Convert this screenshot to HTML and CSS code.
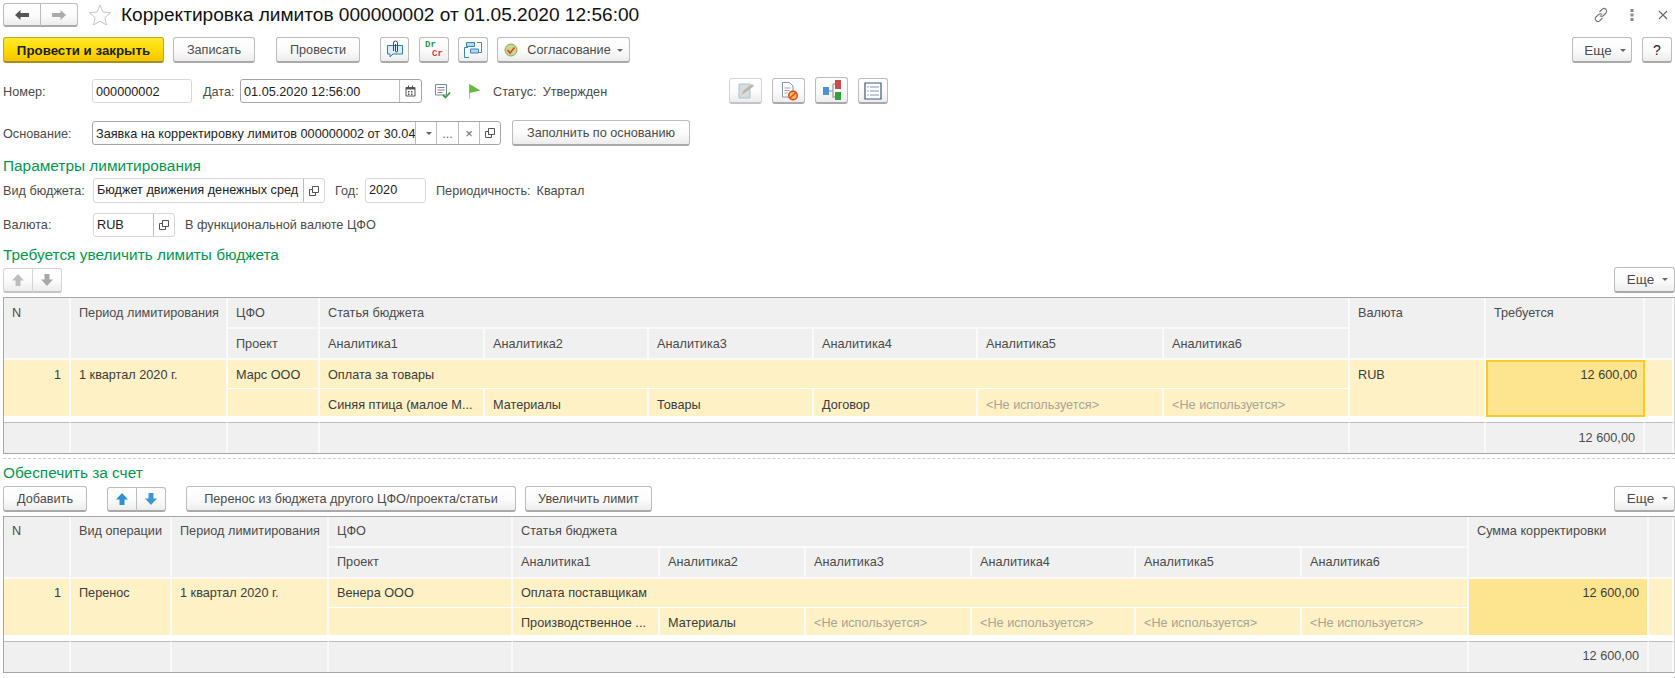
FILE: index.html
```html
<!DOCTYPE html>
<html lang="ru">
    <head>
        <meta charset="UTF-8">
        <title>Корректировка лимитов 000000002</title>
        <link rel="stylesheet" href="styles.css">
    </head>
    <body>
        <!-- заголовок -->
        <div class="title-row">
            <div class="group nav-group">
                <button class="btn nav-btn"><svg width="16" height="12" viewBox="0 0 16 12"><path d="M1 6 6.500 1v3H15v4H6.500v3z" fill="#555"/></svg></button>
                <button class="btn nav-btn"><svg width="16" height="12" viewBox="0 0 16 12"><path d="M15 6 9.500 1v3H1v4h8.500v3z" fill="#aaa"/></svg></button>
            </div>
            <svg class="star" width="24" height="24" viewBox="0 0 24 24"><path d="M12 2l3 7 7.500.7-5.700 5 1.700 7.300L12 18.200 5.500 22l1.700-7.300-5.700-5L9 9z" fill="#fff" stroke="#c4c4c4"/></svg>
            <h1>Корректировка лимитов 000000002 от 01.05.2020 12:56:00</h1>
            <div class="win-icons">
                <svg width="16" height="16" viewBox="0 0 16 16" fill="none" stroke="#777" stroke-width="1.100"><path d="M6.500 5 9 2.500a2.600 2.600 0 0 1 4 3.500l-2.500 2.500a2.600 2.600 0 0 1-3.700 0"/><path d="M9.500 11 7 13.500A2.600 2.600 0 0 1 3 10l2.500-2.500a2.600 2.600 0 0 1 3.700 0"/></svg>
                <svg class="dots" width="4" height="14" viewBox="0 0 4 14"><path d="M.5 1h3v3h-3zM.5 5.500h3v3h-3zM.5 10h3v3h-3z" fill="#888"/></svg>
                <svg class="close" width="10" height="10" viewBox="0 0 10 10"><path d="M1 1l8 8M9 1l-8 8" stroke="#666" stroke-width="1.100"/></svg>
            </div>
        </div>

        <!-- команды -->
        <div class="toolbar main-bar">
            <button class="btn primary w-post-close">Провести и закрыть</button>
            <button class="btn w-save">Записать</button>
            <button class="btn w-post">Провести</button>
            <button class="btn icon-btn i-clip">
                <svg width="18" height="20" viewBox="0 0 18 20"><path d="M1.500 5.500h15V14H7l-3 3v-3H1.500z" fill="#dcecf6" stroke="#2f7fa8"/><path d="M7.500 11V3a2 2 0 0 1 4 0v8a1 1 0 0 1-2 0V4" fill="none" stroke="#444"/></svg>
            </button>
            <button class="btn icon-btn dr-cr"><span class="dr">Dr</span><span class="cr">Cr</span></button>
            <button class="btn icon-btn">
                <svg width="20" height="20" viewBox="0 0 20 20" fill="none" stroke="#3a86b7"><path d="M5 7.500H1.500v10H6"/><path d="M14 2.500h4.500v10H15"/><path d="M3.500 2.500h8v4h-8z" fill="#b9d6ea"/><path d="M7.500 9h8v4h-8z" fill="#b9d6ea"/></svg>
            </button>
            <button class="btn w-agree">
                <svg width="14" height="14" viewBox="0 0 14 14"><circle cx="7" cy="7" r="6" fill="#c7d88e" stroke="#8fa65a"/><path d="M3.500 7l2.500 3 4.500-5.500" fill="none" stroke="#d8402c" stroke-width="1.500"/></svg>
                <span class="agree-text">Согласование</span><i class="caret"></i>
            </button>
            <button class="btn more push">Еще<i class="caret"></i></button>
            <button class="btn help">?</button>
        </div>

        <!-- номер, дата -->
        <div class="form-row row-number">
            <label class="lbl w-label">Номер:</label>
            <div class="field w-number"><span class="val">000000002</span></div>
            <label class="lbl m-date">Дата:</label>
            <div class="field active w-date">
                <span class="val">01.05.2020 12:56:00</span>
                <span class="seg seg-cal"><svg width="11" height="12" viewBox="0 0 11 12"><path d="M1 2.500h9V11H1z" fill="#fff" stroke="#555"/><path d="M1 2h9v2.500H1zM3 .5h1v2H3zM7 .5h1v2H7z" fill="#555"/><path d="M3 6h1.500v1.500H3zM6 6h1.500v1.500H6zM3 8.500h1.500V10H3zM6 8.500h1.500V10H6z" fill="#555"/></svg></span>
            </div>
            <svg class="doc-check" width="17" height="16" viewBox="0 0 17 16"><path d="M1.500 1.500h11V12h-11z" fill="#fff" stroke="#7a8a96"/><path d="M3.500 4.500h7M3.500 7h7M3.500 9.500h5" stroke="#7a8a96"/><path d="M9 12l2.500 2.500L16 9.500" fill="none" stroke="#3aa335" stroke-width="1.800"/></svg>
            <svg class="flag" width="13" height="17" viewBox="0 0 13 17"><path d="M1.500 1v15" stroke="#b5b5b5"/><path d="M1.500 1l11 6.500-11 2.500z" fill="#63bb3b"/></svg>
            <span class="lbl m-status">Статус:</span>
            <span class="lbl m-state">Утвержден</span>
            <button class="btn icon-btn2 disabled m-first">
                <svg width="20" height="20" viewBox="0 0 20 20"><path d="M3 3h11v14H3z" fill="#d8dcdc" stroke="#a9c3d2"/><path d="M5 14l3-5 8-6 2 2-8 6z" fill="#bcb3a9"/></svg>
            </button>
            <button class="btn icon-btn2">
                <svg width="20" height="20" viewBox="0 0 20 20"><path d="M3.500 1.500h7l3.500 3.500v11h-10.500z" fill="#fff" stroke="#8896a0"/><path d="M5.500 7h6M5.500 9.500h5M5.500 12h3" stroke="#9aa5ad"/><circle cx="14" cy="14.500" r="4.300" fill="#f6c343" stroke="#e0402a" stroke-width="1.400"/><path d="M11 17l6-5.500" stroke="#e0402a" stroke-width="1.400"/></svg>
            </button>
            <button class="btn icon-btn2 tall">
                <svg width="20" height="22" viewBox="0 0 20 22"><path d="M1 8h6v8H1z" fill="#4a90d9"/><path d="M7 12h4M11 5v13h3M11 5h3" fill="none" stroke="#aaa" stroke-width="1.500"/><path d="M13 1h6v9h-6z" fill="#cf4a4a"/><path d="M13 13h6v8h-6z" fill="#2fa23c"/></svg>
            </button>
            <button class="btn icon-btn2">
                <svg width="18" height="18" viewBox="0 0 18 18"><path d="M1 1h16v16H1z" fill="#fff" stroke="#3c5b78" stroke-width="1.200"/><path d="M3.500 5h1M3.500 9h1M3.500 13h1" stroke="#3c5b78"/><path d="M6 5h9M6 9h9M6 13h9" stroke="#8096a8"/></svg>
            </button>
        </div>

        <div class="form-row row-basis">
            <label class="lbl w-label">Основание:</label>
            <div class="field active w-basis">
                <span class="val">Заявка на корректировку лимитов 000000002 от 30.04</span>
                <span class="seg seg-drop"><i class="caret dark"></i></span>
                <span class="seg seg-pick">...</span>
                <span class="seg seg-clear">×</span>
                <span class="seg seg-open"><svg class="open-ico" width="10" height="10" viewBox="0 0 10 10"><path d="M3.500.5h6v6h-6z" fill="none" stroke="#555"/><path d="M.5 3.500h3v3h3v3h-6z" fill="none" stroke="#555"/></svg></span>
            </div>
            <button class="btn w-fill">Заполнить по основанию</button>
        </div>

        <h3 class="head h-params">Параметры лимитирования</h3>

        <div class="form-row row-kind">
            <label class="lbl w-label">Вид бюджета:</label>
            <div class="field w-kind">
                <span class="val">Бюджет движения денежных сред</span>
                <span class="seg seg-open"><svg class="open-ico" width="10" height="10" viewBox="0 0 10 10"><path d="M3.500.5h6v6h-6z" fill="none" stroke="#555"/><path d="M.5 3.500h3v3h3v3h-6z" fill="none" stroke="#555"/></svg></span>
            </div>
            <label class="lbl m-year">Год:</label>
            <div class="field w-year"><span class="val">2020</span></div>
            <span class="lbl m-period">Периодичность:</span>
            <span class="lbl m-quarter">Квартал</span>
        </div>

        <div class="form-row row-cur">
            <label class="lbl w-label">Валюта:</label>
            <div class="field w-cur">
                <span class="val">RUB</span>
                <span class="seg seg-open"><svg class="open-ico" width="10" height="10" viewBox="0 0 10 10"><path d="M3.500.5h6v6h-6z" fill="none" stroke="#555"/><path d="M.5 3.500h3v3h3v3h-6z" fill="none" stroke="#555"/></svg></span>
            </div>
            <span class="lbl m-func">В функциональной валюте ЦФО</span>
        </div>

        <h3 class="head h-need">Требуется увеличить лимиты бюджета</h3>

        <div class="toolbar grid-bar">
            <div class="group w-arrows disabled">
                <button class="btn seg-btn"><svg width="14" height="14" viewBox="0 0 14 14"><path d="M7 1l6 6.500H9.500V13h-5V7.500H1z" fill="#bdbdbd"/></svg></button>
                <button class="btn seg-btn"><svg width="14" height="14" viewBox="0 0 14 14"><path d="M7 13l6-6.500H9.500V1h-5v5.500H1z" fill="#a8a8a8"/></svg></button>
            </div>
            <button class="btn more push">Еще<i class="caret"></i></button>
        </div>

        <!-- таблица 1 -->
        <table class="grid first-grid">
            <colgroup>
                <col class="c67"><col class="c157"><col class="c92"><col class="c165"><col class="c164"><col class="c165"><col class="c164"><col class="c186"><col class="c186"><col class="c136"><col class="c159"><col class="c29">
            </colgroup>
            <tr class="head-row">
                <th rowspan="2">N</th>
                <th rowspan="2">Период лимитирования</th>
                <th>ЦФО</th>
                <th colspan="6">Статья бюджета</th>
                <th rowspan="2">Валюта</th>
                <th rowspan="2">Требуется</th>
                <th rowspan="2"></th>
            </tr>
            <tr class="head-row">
                <th>Проект</th>
                <th>Аналитика1</th><th>Аналитика2</th><th>Аналитика3</th><th>Аналитика4</th><th>Аналитика5</th><th>Аналитика6</th>
            </tr>
            <tr class="data-row">
                <td rowspan="2" class="num">1</td>
                <td rowspan="2">1 квартал 2020 г.</td>
                <td>Марс ООО</td>
                <td colspan="6">Оплата за товары</td>
                <td rowspan="2">RUB</td>
                <td rowspan="2" class="num amount selected">12 600,00</td>
                <td rowspan="2"></td>
            </tr>
            <tr class="data-row">
                <td></td>
                <td>Синяя птица (малое М...</td><td>Материалы</td><td>Товары</td><td>Договор</td>
                <td class="unused">&lt;Не используется&gt;</td><td class="unused">&lt;Не используется&gt;</td>
            </tr>
            <tr class="gap-row"><td colspan="12"></td></tr>
            <tr class="foot-row">
                <td></td><td></td><td></td><td colspan="6"></td><td></td>
                <td class="num">12 600,00</td><td></td>
            </tr>
        </table>

        <div class="dash"></div>

        <h3 class="head h-cover">Обеспечить за счет</h3>

        <div class="toolbar grid-bar2">
            <button class="btn w-add">Добавить</button>
            <div class="group w-arrows2">
                <button class="btn seg-btn"><svg width="14" height="14" viewBox="0 0 14 14"><path d="M7 1l6 6.500H9.500V13h-5V7.500H1z" fill="#2f8fd0"/></svg></button>
                <button class="btn seg-btn"><svg width="14" height="14" viewBox="0 0 14 14"><path d="M7 13l6-6.500H9.500V1h-5v5.500H1z" fill="#3f97d6"/></svg></button>
            </div>
            <button class="btn w-transfer">Перенос из бюджета другого ЦФО/проекта/статьи</button>
            <button class="btn w-raise">Увеличить лимит</button>
            <button class="btn more push">Еще<i class="caret"></i></button>
        </div>

        <!-- таблица 2 -->
        <table class="grid">
            <colgroup>
                <col class="c67"><col class="c101"><col class="c157"><col class="c184"><col class="c147"><col class="c146"><col class="c166"><col class="c164"><col class="c166"><col class="c167"><col class="c180"><col class="c25">
            </colgroup>
            <tr class="head-row">
                <th rowspan="2">N</th>
                <th rowspan="2">Вид операции</th>
                <th rowspan="2">Период лимитирования</th>
                <th>ЦФО</th>
                <th colspan="6">Статья бюджета</th>
                <th rowspan="2">Сумма корректировки</th>
                <th rowspan="2"></th>
            </tr>
            <tr class="head-row">
                <th>Проект</th>
                <th>Аналитика1</th><th>Аналитика2</th><th>Аналитика3</th><th>Аналитика4</th><th>Аналитика5</th><th>Аналитика6</th>
            </tr>
            <tr class="data-row">
                <td rowspan="2" class="num">1</td>
                <td rowspan="2">Перенос</td>
                <td rowspan="2">1 квартал 2020 г.</td>
                <td>Венера ООО</td>
                <td colspan="6">Оплата поставщикам</td>
                <td rowspan="2" class="num amount">12 600,00</td>
                <td rowspan="2"></td>
            </tr>
            <tr class="data-row">
                <td></td>
                <td>Производственное ...</td><td>Материалы</td>
                <td class="unused">&lt;Не используется&gt;</td><td class="unused">&lt;Не используется&gt;</td><td class="unused">&lt;Не используется&gt;</td><td class="unused">&lt;Не используется&gt;</td>
            </tr>
            <tr class="gap-row"><td colspan="12"></td></tr>
            <tr class="foot-row">
                <td></td><td></td><td></td><td></td><td colspan="6"></td>
                <td class="num">12 600,00</td><td></td>
            </tr>
        </table>
        <div class="next-edge"></div>
    </body>
</html>
```

FILE: styles.css
```css
html, body {
    margin: 0;
    padding: 0;
    height: 678px;
    overflow: hidden;
    background: #fff;
}

body {
    font-family: "Liberation Sans", Arial, sans-serif;
    font-size: 12.7px;
    color: #4b4b4b;
}

button {
    font: inherit;
    color: inherit;
    padding: 0;
}

/* кнопки */
.btn {
    display: flex;
    align-items: center;
    justify-content: center;
    height: 26px;
    box-sizing: border-box;
    border: 1px solid #bcbcbc;
    border-bottom: 2px solid #a9a9a9;
    border-radius: 3px;
    background: linear-gradient(#ffffff, #fbfbfb 55%, #ececec);
    flex: none;
}

.primary {
    font-size: 13.3px;
    font-weight: bold;
    color: #1e1e1e;
    border-color: #c4a824;
    border-bottom-color: #a89020;
    background: linear-gradient(#ffe92f, #fdd900 55%, #f4c400);
}

.group {
    display: flex;
    flex: none;
}

.group .btn + .btn {
    margin-left: -1px;
}

.group .btn:first-child {
    border-radius: 3px 0 0 3px;
}

.group .btn:last-child {
    border-radius: 0 3px 3px 0;
}

.seg-btn {
    width: 30px;
    height: 25px;
}

.disabled .seg-btn, .btn.disabled {
    border-color: #d4d4d4;
    border-bottom-color: #c4c4c4;
}

.caret {
    display: inline-block;
    width: 0;
    height: 0;
    margin-left: 6px;
    border-left: 3px solid transparent;
    border-right: 3px solid transparent;
    border-top: 3px solid #666;
}

/* заголовок */
.title-row {
    display: flex;
    align-items: center;
    height: 24px;
    padding: 3px 0 0 3px;
}

.nav-group .nav-btn {
    width: 38px;
    height: 24px;
}

.star {
    margin-left: 10px;
}

h1 {
    margin: 0 0 0 9px;
    font-size: 19.1px;
    font-weight: normal;
    color: #111;
    white-space: nowrap;
}

.win-icons {
    display: flex;
    align-items: center;
    margin-left: auto;
    padding-right: 7px;
}

.dots {
    margin-left: 21px;
}

.close {
    margin-left: 24px;
}

/* панели */
.toolbar {
    display: flex;
    align-items: center;
}

.push {
    margin-left: auto;
}

.main-bar {
    margin: 10px 3px 0;
}

.main-bar .btn, .w-fill {
    padding-top: 1px;
}

.w-post-close { width: 161px; }
.w-save { width: 82px; margin-left: 9px; }
.w-post { width: 84px; margin-left: 21px; }
.icon-btn { width: 30px; margin-left: 9px; }
.i-clip { width: 29px; margin-left: 20px; }
.w-agree { width: 133px; margin-left: 9px; }
.agree-text { margin-left: 9px; }
.more { font-size: 13.5px; padding-left: 6px; }
.more .caret { margin-left: 8px; }
.main-bar .more { width: 60px; }
.help { width: 30px; margin-left: 10px; font-size: 14px; color: #222; }

.dr-cr {
    flex-direction: column;
    margin-left: 10px;
    font-family: "Liberation Mono", monospace;
    font-size: 9px;
    font-weight: bold;
    line-height: 9px;
}

.dr { color: #2a9a3c; margin-right: 7px; }
.cr { color: #e0353a; margin-left: 7px; }

/* форма */
.form-row {
    display: flex;
    align-items: center;
    height: 24px;
    margin-left: 3px;
}

.row-number { margin-top: 16px; }
.row-basis { margin-top: 18px; }
.row-kind { margin-top: 2px; height: 25px; }
.row-cur { margin-top: 10px; }

.row-number .lbl, .row-basis .lbl { padding-top: 1px; }
.row-number .val, .row-basis .val { line-height: 24px; }

.lbl { white-space: nowrap; flex: none; }
.w-label { width: 89px; }

.field {
    display: flex;
    align-items: stretch;
    box-sizing: border-box;
    height: 100%;
    border: 1px solid #d8d8d8;
    border-radius: 3px;
    background: #fff;
    color: #222;
    flex: none;
}

.field.active {
    border-color: #a6a6a6;
}

.val {
    flex: 1;
    min-width: 0;
    padding: 0 3px;
    overflow: hidden;
    white-space: nowrap;
    line-height: 22px;
}

.seg {
    display: flex;
    align-items: center;
    justify-content: center;
    width: 20px;
    border-left: 1px solid #bdbdbd;
    flex: none;
    color: #666;
    box-sizing: border-box;
}

.seg-cal { width: 22px; }
.seg-drop { width: 21px; }
.seg-pick { width: 22px; padding-top: 2px; }
.seg-clear { width: 21px; font-size: 13px; }
.seg-open { width: 21px; }

.w-number { width: 100px; }
.m-date { margin-left: 11px; width: 37px; }
.w-date { width: 182px; }
.doc-check { margin-left: 12px; }
.flag { margin-left: 17px; }
.m-status { margin-left: 12px; }
.m-state { margin-left: 6px; }

.icon-btn2 { width: 33px; margin-left: 10px; }
.icon-btn2.tall { height: 27px; margin-top: -2px; }
.m-first { margin-left: auto; }
.row-number .icon-btn2:last-child { width: 30px; margin-right: 787px; }

.w-basis { width: 409px; }
.w-fill { width: 178px; margin-left: 11px; }

.w-kind { width: 232px; margin-left: 1px; }
.m-year { margin-left: 10px; width: 30px; }
.w-year { width: 61px; }
.m-period { margin-left: 10px; }
.m-quarter { margin-left: 6px; }

.w-cur { width: 82px; margin-left: 1px; }
.m-func { margin-left: 10px; }

/* разделы */
.head {
    margin: 0 0 0 3px;
    font-size: 15.4px;
    font-weight: normal;
    color: #00994f;
    line-height: 20px;
}

.h-params { margin-top: 11px; }
.h-need { margin-top: 8px; }
.h-cover { margin-top: 4px; }

.grid-bar { margin: 2px 0 0 3px; }
.w-arrows .seg-btn { width: 30px; }
.grid-bar .more, .grid-bar2 .more { width: 61px; }

.grid-bar2 { margin: 3px 0 0 3px; }
.w-add { width: 84px; }
.w-arrows2 { margin-left: 20px; }
.w-transfer { width: 330px; margin-left: 20px; }
.w-raise { width: 127px; margin-left: 9px; }

/* таблицы */
.grid {
    width: 1672px;
    margin: 4px 0 0 3px;
    table-layout: fixed;
    border-collapse: separate;
    border-spacing: 0;
    border: 1px solid #a6a6a6;
    border-right: 1px solid #d8d8d8;
}

.grid th, .grid td {
    box-sizing: border-box;
    padding: 7px 8px 0;
    vertical-align: top;
    text-align: left;
    font-weight: normal;
    overflow: hidden;
    white-space: nowrap;
    border-right: 2px solid #fafafa;
    border-bottom: 1px solid #fff;
}

.grid th {
    background: #f0f0f0;
    border-bottom: 2px solid #fafafa;
    height: 31px;
}

.head-row + .head-row th {
    height: 31px;
}

.data-row td {
    background: #fdf1c5;
    color: #3c3c3c;
    height: 29px;
}

.data-row + .data-row td {
    height: 28px;
    padding-top: 8px;
}

.first-grid th, .first-grid td {
    padding-top: 8px;
}

.first-grid .data-row + .data-row td {
    padding-top: 9px;
}

.grid .gap-row td {
    height: 5px;
    padding: 0;
    background: #fff;
    border: 0;
}

.foot-row td {
    height: 31px;
    background: #f0f0f0;
    border-top: 1px solid #bdbdbd;
    border-bottom: 0;
}

.num {
    text-align: right !important;
}

.grid .amount {
    background: #fde48e;
}

.grid .selected {
    border: 2px solid #fdc92a;
    padding: 6px 6px 0;
}

.grid .unused {
    color: #aaa396;
}

.dash {
    margin: 4px 0 0 3px;
    border-top: 1px dashed #d0d0d0;
}

.next-edge {
    margin: 4px 0 0 3px;
    width: 1670px;
    height: 2px;
    border-left: 1px solid #bbb;
    border-right: 1px solid #bbb;
}

col.c25 { width: 25px; }
col.c29 { width: 29px; }
col.c67 { width: 67px; }
col.c92 { width: 92px; }
col.c101 { width: 101px; }
col.c136 { width: 136px; }
col.c146 { width: 146px; }
col.c147 { width: 147px; }
col.c157 { width: 157px; }
col.c159 { width: 159px; }
col.c164 { width: 164px; }
col.c165 { width: 165px; }
col.c166 { width: 166px; }
col.c167 { width: 167px; }
col.c180 { width: 180px; }
col.c184 { width: 184px; }
col.c186 { width: 186px; }
```
